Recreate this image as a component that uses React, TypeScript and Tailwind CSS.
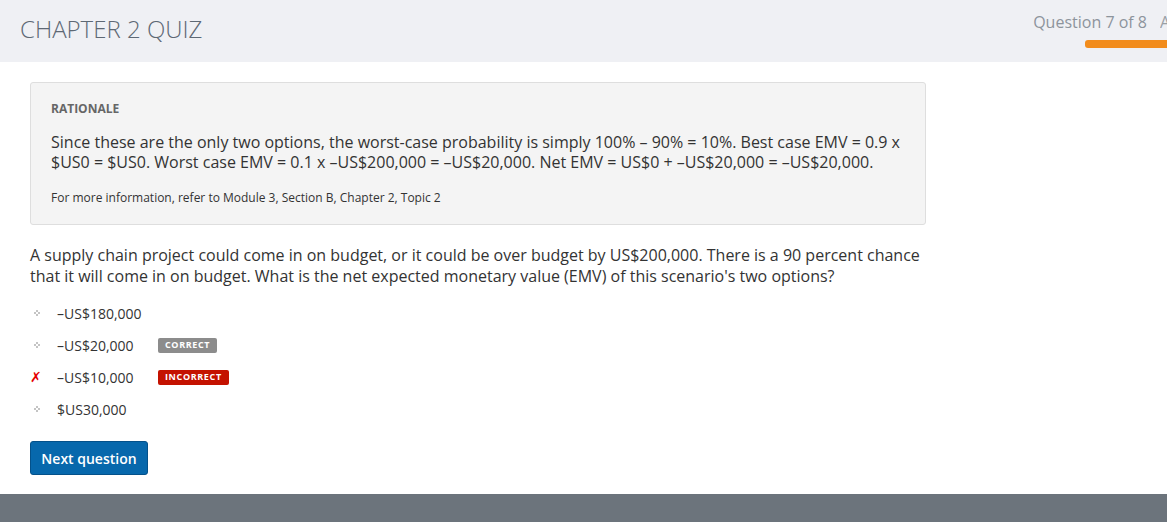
import React from "react";

const font = { fontFamily: '"Open Sans", "Noto Sans", sans-serif' };

type Option = {
  label: string;
  mark: "none" | "wrong";
  badge?: "correct" | "incorrect";
};

const options: Option[] = [
  { label: "–US$180,000", mark: "none" },
  { label: "–US$20,000", mark: "none", badge: "correct" },
  { label: "–US$10,000", mark: "wrong", badge: "incorrect" },
  { label: "$US30,000", mark: "none" },
];

function Bullet() {
  return (
    <svg width="6" height="6" viewBox="0 0 6 6" aria-hidden>
      <rect x="2" y="0" width="2" height="2" fill="#c4c4c4" />
      <rect x="0" y="2" width="2" height="2" fill="#c4c4c4" />
      <rect x="4" y="2" width="2" height="2" fill="#c4c4c4" />
      <rect x="2" y="4" width="2" height="2" fill="#c4c4c4" />
    </svg>
  );
}

function Badge({ kind }: { kind: "correct" | "incorrect" }) {
  return (
    <span
      className={`inline-flex h-[15px] items-center rounded-[2px] px-[7px] text-[9px] font-bold uppercase tracking-[0.07em] text-white ${
        kind === "correct" ? "bg-[#8c8c8c]" : "bg-[#c41200]"
      }`}
    >
      {kind}
    </span>
  );
}

export default function App() {
  return (
    <div className="flex h-[522px] w-[1167px] flex-col overflow-hidden bg-white" style={font}>
      <header className="flex h-[62px] shrink-0 items-start justify-between overflow-hidden bg-[#eff0f4] pl-5">
        <h1 className="mt-[12px] text-[24px] font-light leading-[34px] text-[#5d6874]">
          CHAPTER 2 QUIZ
        </h1>
        <div className="flex shrink-0 flex-col items-end">
          <div className="mt-[11px] flex items-center whitespace-nowrap text-[16px] leading-[22px] text-[#8d949c]">
            <span>Question 7 of 8</span>
            <span className="ml-[13px] w-[7px] overflow-hidden text-[#9aa0a6]">A</span>
          </div>
          <div className="mt-[7px] h-2 w-[82px] rounded-l-[3px] bg-[#f28c1c]" />
        </div>
      </header>

      <main className="flex-1 px-[30px] pt-5">
        <section className="w-[896px] rounded-[3px] border border-[#dedede] bg-[#f4f4f4] px-5 pt-[18px] pb-[18px]">
          <div className="text-[12px] font-bold leading-4 text-[#666]">RATIONALE</div>
          <p className="mt-[15px] text-[16px] leading-5 text-[#333]">
            Since these are the only two options, the worst-case probability is simply 100% – 90% = 10%. Best case EMV = 0.9 x $US0 = $US0. Worst case EMV = 0.1 x –US$200,000 = –US$20,000. Net EMV = US$0 + –US$20,000 = –US$20,000.
          </p>
          <p className="mt-[18px] text-[12px] leading-4 text-[#333]">
            For more information, refer to Module 3, Section B, Chapter 2, Topic 2
          </p>
        </section>

        <p className="mt-[20px] w-[896px] text-[16px] leading-[21px] text-[#333]">
          A supply chain project could come in on budget, or it could be over budget by US$200,000. There is a 90 percent chance that it will come in on budget. What is the net expected monetary value (EMV) of this scenario's two options?
        </p>

        <ul className="mt-[10px] flex flex-col">
          {options.map((o) => (
            <li key={o.label} className="flex h-8 items-center text-[14px] text-[#333]">
              <span className="flex w-[27px] items-center">
                {o.mark === "wrong" ? (
                  <span
                    className="text-[14px] font-bold italic leading-none text-[#e60000]"
                    style={{ fontFamily: '"DejaVu Sans", sans-serif' }}
                  >
                    ✗
                  </span>
                ) : (
                  <span className="pl-[4px]">
                    <Bullet />
                  </span>
                )}
              </span>
              <span className="w-[101px]">{o.label}</span>
              {o.badge && <Badge kind={o.badge} />}
            </li>
          ))}
        </ul>

        <button className="mt-[16px] h-[34px] w-[118px] rounded-[3px] border border-[#04518a] bg-[#0768ac] text-[14px] font-semibold text-white">
          Next question
        </button>
      </main>

      <footer className="h-[28px] shrink-0 bg-[#6c747c]" />
    </div>
  );
}
